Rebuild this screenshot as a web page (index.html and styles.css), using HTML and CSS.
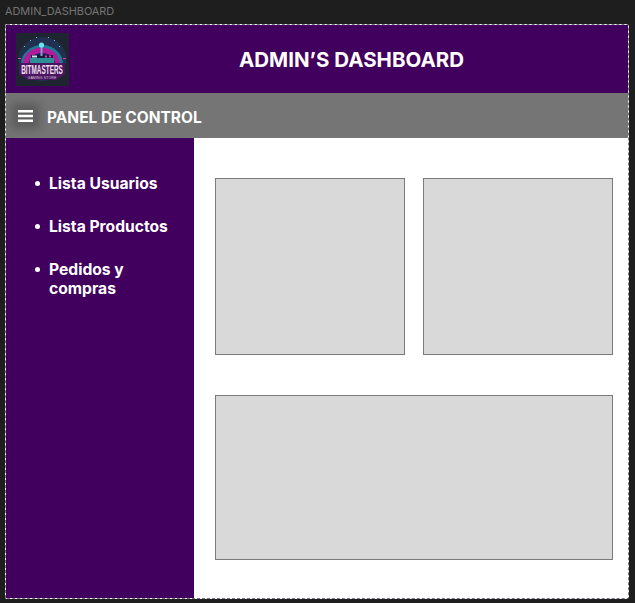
FILE: index.html
```html
<!DOCTYPE html>
<html lang="es">
<head>
<meta charset="utf-8">
<title>ADMIN_DASHBOARD</title>
<link rel="stylesheet" href="styles.css">
</head>
<body>
<div class="frame-label">ADMIN_DASHBOARD</div>
<div class="frame">
  <header class="top">
    <svg class="logo" viewBox="0 0 53 53" role="img" aria-label="Bitmasters logo">
      <rect width="53" height="53" fill="#1f2530"/>
      <ellipse cx="26.500" cy="26" rx="24" ry="22" fill="#20304e"/>
      <path d="M5 31a20 18 0 0 1 42 0z" fill="#1a7d94"/>
      <path d="M7 31a18.500 16.500 0 0 1 37 0z" fill="#b01c9c"/>
      <path d="M13 31a13 11 0 0 1 26 0z" fill="#2c1a5c"/>
      <rect x="15" y="22" width="22" height="3" fill="#181a3c"/>
      <rect x="14" y="25" width="24" height="5" fill="#2d8f96"/>
      <rect x="16" y="22.500" width="5" height="2" fill="#c9e6e6"/>
      <rect x="29" y="22.500" width="2" height="2" fill="#e23fb0"/>
      <rect x="33" y="22.500" width="2" height="2" fill="#e23fb0"/>
      <rect x="24.500" y="14" width="2" height="9" fill="#7fa0c8"/>
      <circle cx="25.500" cy="12" r="2.600" fill="#6fe3ee"/>
      <rect x="2" y="25" width="3" height="1" fill="#e23fb0"/>
      <rect x="47" y="25" width="3" height="1" fill="#e23fb0"/>
      <rect x="8" y="13" width="1" height="1" fill="#4fd0e0"/>
      <rect x="43" y="13" width="1" height="1" fill="#4fd0e0"/>
      <rect x="14" y="7" width="1" height="1" fill="#4fd0e0"/>
      <rect x="38" y="7" width="1" height="1" fill="#4fd0e0"/>
      <rect x="20" y="4" width="1" height="1" fill="#4fd0e0"/>
      <rect x="32" y="4" width="1" height="1" fill="#4fd0e0"/>
      <path d="M3 30h46v11l-9 6H12l-9-6z" fill="#4a1560"/>
      <text class="logo-name" transform="translate(26 41) scale(.8 1.650)">BITMASTERS</text>
      <text class="logo-sub" x="26" y="45.500">GAMING STORE</text>
    </svg>
    <h1 class="title">ADMIN’S DASHBOARD</h1>
  </header>
  <div class="bar">
    <span class="menu-btn" aria-label="Menú">
      <svg class="menu-icon" viewBox="0 0 15 12"><path d="M0 0h15v2.400H0zM0 4.800h15v2.400H0zM0 9.600h15V12H0z" fill="#fff"/></svg>
    </span>
    <span class="bar-title">PANEL DE CONTROL</span>
  </div>
  <div class="main">
    <nav class="side">
      <ul class="side-list">
        <li>Lista Usuarios</li>
        <li>Lista Productos</li>
        <li>Pedidos y compras</li>
      </ul>
    </nav>
    <section class="content">
      <div class="box"></div>
      <div class="box"></div>
      <div class="box box-wide"></div>
    </section>
  </div>
</div>
</body>
</html>
```
FILE: styles.css
```css
* { box-sizing: border-box; }
html, body { margin: 0; height: 100%; }
body {
  background: #1e1e1e;
  font-family: Inter, "Liberation Sans", sans-serif;
  overflow: hidden;
  padding: 5px 0 0 5px;
}
.frame-label {
  height: 19px;
  font-size: 10.900px;
  line-height: 13px;
  color: #757575;
}
.frame {
  width: 624px;
  height: 575px;
  border: 1px dashed #7c7482;
  border-radius: 2px;
  display: flex;
  flex-direction: column;
  background: #fff;
}
.top {
  height: 68px;
  flex: none;
  background: #42005e;
  display: flex;
  align-items: center;
  padding: 0 0 0 10px;
}
.logo { width: 53px; height: 53px; flex: none; display: block; }
.logo-name {
  font-family: "Liberation Sans", sans-serif;
  font-size: 8px;
  font-weight: 700;
  fill: #f4e2f2;
  text-anchor: middle;
}
.logo-sub {
  font-family: "Liberation Sans", sans-serif;
  font-size: 3.500px;
  letter-spacing: .15px;
  fill: #d9c6df;
  text-anchor: middle;
}
.title {
  margin: 2px 0 0 170px;
  font-size: 20.500px;
  line-height: 24px;
  font-weight: 700;
  color: #fff;
  white-space: nowrap;
}
.bar {
  height: 45px;
  flex: none;
  background: #757575;
  display: flex;
  align-items: center;
  padding-left: 12px;
}
.menu-btn {
  width: 15px;
  height: 12px;
  flex: none;
  display: block;
  box-shadow: 0 0 9px 7px rgba(60, 60, 60, .42);
  background: rgba(60, 60, 60, .42);
}
.menu-icon { display: block; width: 15px; height: 12px; }
.bar-title {
  margin: 3px 0 0 14px;
  font-size: 15.500px;
  line-height: 19px;
  font-weight: 700;
  color: #fff;
  white-space: nowrap;
}
.main { flex: 1; display: flex; min-height: 0; }
.side { width: 188px; flex: none; background: #42005e; }
.side-list {
  margin: 0;
  padding: 36px 20px 0 43px;
  list-style: none;
  color: #fff;
  font-size: 15.650px;
  line-height: 19px;
  font-weight: 700;
}
.side-list li { margin-bottom: 24px; position: relative; }
.side-list li::before {
  content: "";
  position: absolute;
  left: -14px;
  top: 7px;
  width: 5px;
  height: 5px;
  border-radius: 50%;
  background: #fff;
}
.content {
  flex: 1;
  display: grid;
  grid-template-columns: 190px 190px;
  grid-template-rows: 177px 165px;
  column-gap: 18px;
  row-gap: 40px;
  padding: 40px 0 0 21px;
  align-content: start;
}
.box {
  background: #d9d9d9;
  border: 1px solid #7a7a7a;
}
.box-wide { grid-column: 1 / 3; }
```
